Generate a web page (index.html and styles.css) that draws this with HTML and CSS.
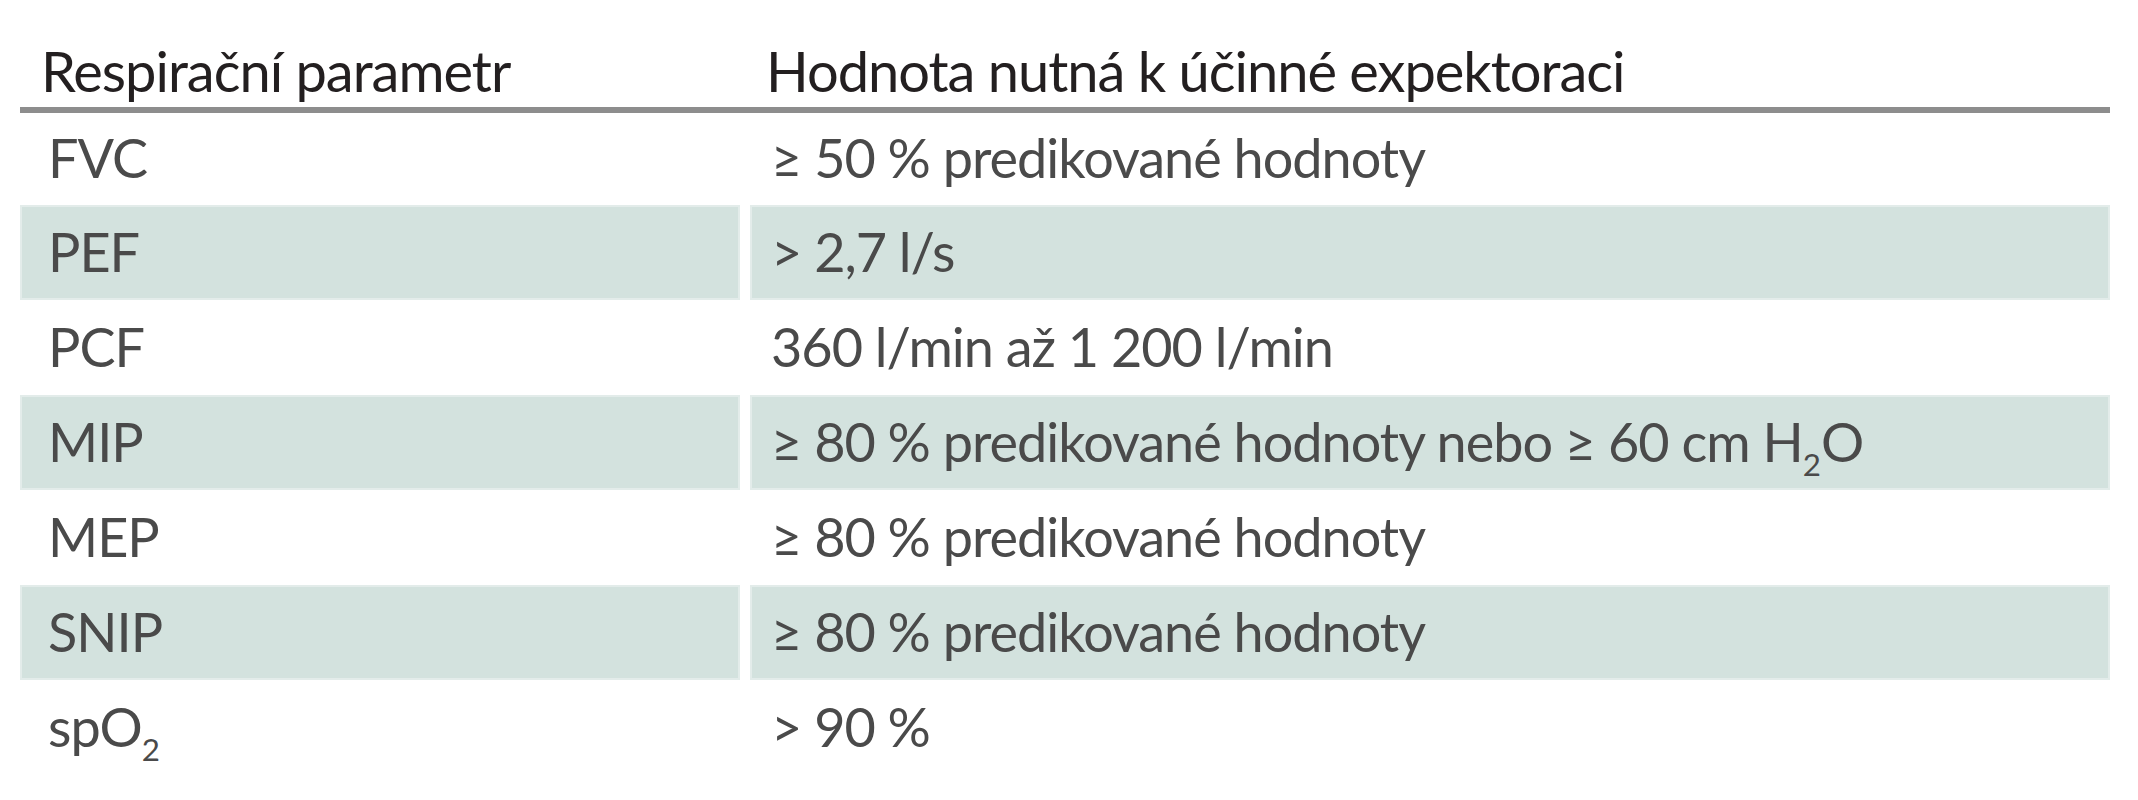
FILE: index.html
```html
<!DOCTYPE html>
<html lang="cs">
<head>
<meta charset="utf-8">
<title>Respirační parametry</title>
<link rel="stylesheet" href="styles.css">
</head>
<body>
<div class="table">
  <div class="head">
    <div class="hcell c1">Respirační parametr</div>
    <div class="hcell c2">Hodnota nutná k účinné expektoraci</div>
  </div>
  <div class="row">
    <div class="cell c1">FVC</div>
    <div class="cell c2">≥ 50 % predikované hodnoty</div>
  </div>
  <div class="row shaded">
    <div class="cell c1">PEF</div>
    <div class="cell c2">&gt; 2,7 l/s</div>
  </div>
  <div class="row">
    <div class="cell c1">PCF</div>
    <div class="cell c2">360 l/min až 1 200 l/min</div>
  </div>
  <div class="row shaded">
    <div class="cell c1">MIP</div>
    <div class="cell c2">≥ 80 % predikované hodnoty nebo ≥ 60 cm H<sub>2</sub>O</div>
  </div>
  <div class="row">
    <div class="cell c1">MEP</div>
    <div class="cell c2">≥ 80 % predikované hodnoty</div>
  </div>
  <div class="row shaded">
    <div class="cell c1">SNIP</div>
    <div class="cell c2">≥ 80 % predikované hodnoty</div>
  </div>
  <div class="row">
    <div class="cell c1">spO<sub>2</sub></div>
    <div class="cell c2">&gt; 90 %</div>
  </div>
</div>
</body>
</html>
```
FILE: styles.css
```css
html, body {
  margin: 0;
  padding: 0;
  background: #ffffff;
}

body {
  font-family: "Lato", "Open Sans", sans-serif;
  letter-spacing: -1px;
}

.table {
  width: 2090px;
  margin: 0 0 0 20px;
}

.head {
  display: grid;
  grid-template-columns: 720px 1360px;
  column-gap: 10px;
  padding-top: 39px;
  padding-bottom: 4px;
  border-bottom: 6px solid #8d8d8d;
}

.hcell {
  font-size: 56px;
  line-height: 64px;
  color: #231f20;
}

.hcell.c1 { padding-left: 21px; }
.hcell.c2 { padding-left: 16px; }

.row {
  display: grid;
  grid-template-columns: 720px 1360px;
  column-gap: 10px;
  height: 95px;
}

.head + .row {
  height: 92px;
}

.cell {
  display: flex;
  align-items: center;
  padding-bottom: 3px;
  font-size: 54px;
  color: #4a4a4a;
  white-space: nowrap;
}

.cell.c1 { padding-left: 28px; }
.cell.c2 { padding-left: 21px; }

.shaded .cell {
  background: #d3e2de;
  box-shadow: inset 0 0 0 2px #e3ecea;
}

sub {
  font-size: 58%;
  position: relative;
  vertical-align: baseline;
  top: 0.72em;
  letter-spacing: 0;
}
```
